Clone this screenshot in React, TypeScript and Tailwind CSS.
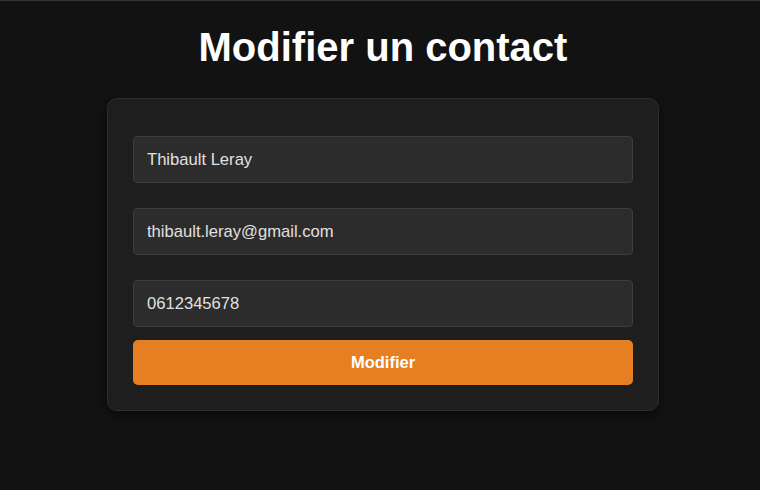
import React from "react";

const inputCls =
  "h-[47px] w-full rounded-[4px] border border-[#3d3d3d] bg-[#2c2c2c] px-[13px] text-[16.6px] text-[#e0e0e0] outline-none";

export default function App() {
  return (
    <div className="min-h-[490px] w-full bg-[#121212] border-t border-[#333333] pl-[6px] font-['Liberation_Sans',Arial,sans-serif]">
      <h1 className="mt-[23px] mb-[28px] text-center text-[40px] leading-[46px] font-bold text-white">
        Modifier un contact
      </h1>
      <div className="mx-auto flex w-[552px] flex-col gap-[25px] rounded-[10px] border border-[#2e2e2e] bg-[#1e1e1e] px-[25px] pt-[37px] pb-[25px] shadow-[0_4px_12px_rgba(0,0,0,0.5)]">
        <input className={inputCls} defaultValue="Thibault Leray" />
        <input className={inputCls} defaultValue="thibault.leray@gmail.com" />
        <div className="flex flex-col gap-[13px]">
          <input className={inputCls} defaultValue="0612345678" />
          <button className="h-[45px] w-full rounded-[5px] bg-[#e67e22] text-[16.5px] font-bold text-white">
            Modifier
          </button>
        </div>
      </div>
    </div>
  );
}
